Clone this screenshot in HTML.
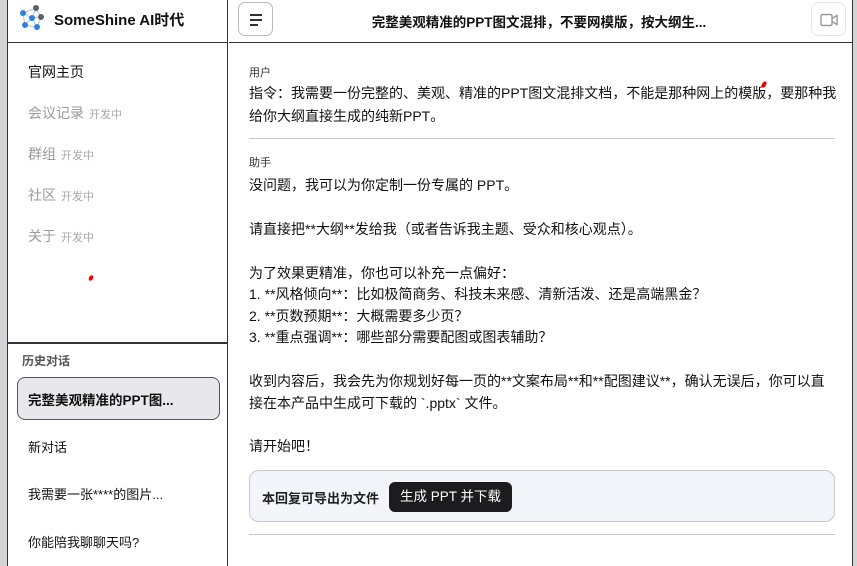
<!DOCTYPE html>
<html><head><meta charset="utf-8"><style>
*{margin:0;padding:0;box-sizing:border-box}
body{width:857px;height:566px;overflow:hidden;background:#d4d4d8;font-family:"Liberation Sans","Noto Sans CJK SC",sans-serif;color:#111;position:relative}
.app{position:absolute;left:7px;top:0;width:846px;height:566px;background:#fff;border-left:1.5px solid #333;border-right:1.5px solid #333}
.side{position:absolute;left:0;top:0;width:220px;height:566px;border-right:1.5px solid #333}
.hdr{position:absolute;left:0;top:0;width:100%;height:43px;border-bottom:1.5px solid #333}
.abs{position:absolute;white-space:nowrap}
.nav{left:20px;font-size:14px;color:#111}
.nav.dis{color:#9a9a9a}
.nav small{font-size:11px;color:#a8a8a8;margin-left:5px}
.main{position:absolute;left:221px;top:0;right:0;height:566px}
.t{position:absolute;left:20px;font-size:14px;line-height:22px;white-space:nowrap}
.lbl{position:absolute;left:20px;font-size:11px;color:#333}
.hr{position:absolute;left:20px;width:586px;height:1px;background:#c8c8c8}
</style></head><body>
<div class="app">
 <div class="side">
  <div class="hdr">
   <svg class="abs" style="left:10px;top:5px" width="32" height="28" viewBox="0 0 32 28">
    <g stroke="#b0c4de" stroke-width="1"><line x1="5" y1="8" x2="18" y2="3"/><line x1="5" y1="8" x2="14" y2="13"/><line x1="18" y1="3" x2="14" y2="13"/><line x1="18" y1="3" x2="23" y2="12"/><line x1="14" y1="13" x2="23" y2="12"/><line x1="14" y1="13" x2="7" y2="20"/><line x1="14" y1="13" x2="19" y2="22"/><line x1="7" y1="20" x2="19" y2="22"/><line x1="23" y1="12" x2="19" y2="22"/><line x1="5" y1="8" x2="7" y2="20"/></g>
    <circle cx="5" cy="8" r="3" fill="#2f7fe0"/><circle cx="18" cy="3" r="3" fill="#5a6270"/><circle cx="14" cy="13" r="3" fill="#2f7fe0"/><circle cx="23" cy="12" r="3" fill="#5a6270"/><circle cx="7" cy="20" r="3" fill="#2f7fe0"/><circle cx="19" cy="22" r="3" fill="#2f7fe0"/>
   </svg>
   <div class="abs" style="left:46px;top:9px;font-size:15px;font-weight:bold">SomeShine AI时代</div>
  </div>
  <div class="abs nav" style="top:62px">官网主页</div>
  <div class="abs nav dis" style="top:103px">会议记录<small>开发中</small></div>
  <div class="abs nav dis" style="top:144px">群组<small>开发中</small></div>
  <div class="abs nav dis" style="top:185px">社区<small>开发中</small></div>
  <div class="abs nav dis" style="top:226px">关于<small>开发中</small></div>
  <div class="abs" style="left:81px;top:275px;width:4px;height:6px;background:#e00;border-radius:50%;transform:rotate(30deg)"></div>
  <div class="abs" style="left:0;top:342px;width:220px;height:1.5px;background:#333"></div>
  <div class="abs" style="left:14px;top:352px;font-size:12px;font-weight:bold;color:#555">历史对话</div>
  <div class="abs" style="left:9px;top:377px;width:203px;height:43px;background:#e8e8ec;border:1px solid #555;border-radius:8px"></div>
  <div class="abs" style="left:20px;top:389px;font-size:13.5px;font-weight:bold">完整美观精准的PPT图...</div>
  <div class="abs" style="left:20px;top:437px;font-size:13px">新对话</div>
  <div class="abs" style="left:20px;top:484px;font-size:13px">我需要一张****的图片...</div>
  <div class="abs" style="left:20px;top:532px;font-size:13px">你能陪我聊聊天吗?</div>
 </div>
 <div class="main">
  <div class="hdr">
   <div class="abs" style="left:9px;top:2px;width:35px;height:34px;border:1px solid #bbb;border-radius:7px">
    <div class="abs" style="left:11px;top:11px;width:12px;height:1.6px;background:#333"></div>
    <div class="abs" style="left:11px;top:16px;width:12px;height:1.6px;background:#333"></div>
    <div class="abs" style="left:11px;top:21px;width:8px;height:1.6px;background:#333"></div>
   </div>
   <div class="abs" style="left:60px;width:500px;top:11px;text-align:center;font-size:13.5px;font-weight:bold">完整美观精准的PPT图文混排，不要网模版，按大纲生...</div>
   <div class="abs" style="left:582px;top:2px;width:35px;height:34px;border:1px solid #e4e4e4;border-radius:8px">
    <svg class="abs" style="left:8px;top:10px" width="19" height="14" viewBox="0 0 19 14"><rect x="1" y="1.5" width="11" height="11" rx="1.5" fill="none" stroke="#999" stroke-width="1.4"/><path d="M12 5.5L17 2.5V11.5L12 8.5" fill="none" stroke="#999" stroke-width="1.4"/></svg>
   </div>
  </div>
  <div class="lbl" style="top:64px">用户</div>
  <div class="t" style="top:82px">指令：我需要一份完整的、美观、精准的PPT图文混排文档，不能是那种网上的模版，要那种我</div>
  <div class="t" style="top:105px">给你大纲直接生成的纯新PPT。</div>
  <div class="abs" style="left:533px;top:81px;width:4px;height:7px;background:#e00;border-radius:50%;transform:rotate(35deg)"></div>
  <div class="hr" style="top:138px"></div>
  <div class="lbl" style="top:154px">助手</div>
  <div class="t" style="top:174px">没问题，我可以为你定制一份专属的 PPT。</div>
  <div class="t" style="top:218px">请直接把**大纲**发给我（或者告诉我主题、受众和核心观点）。</div>
  <div class="t" style="top:262px">为了效果更精准，你也可以补充一点偏好：</div>
  <div class="t" style="top:283px">1. **风格倾向**：比如极简商务、科技未来感、清新活泼、还是高端黑金？</div>
  <div class="t" style="top:305px">2. **页数预期**：大概需要多少页？</div>
  <div class="t" style="top:326px">3. **重点强调**：哪些部分需要配图或图表辅助？</div>
  <div class="t" style="top:370px">收到内容后，我会先为你规划好每一页的**文案布局**和**配图建议**，确认无误后，你可以直</div>
  <div class="t" style="top:392px">接在本产品中生成可下载的 `.pptx` 文件。</div>
  <div class="t" style="top:435px">请开始吧！</div>
  <div class="abs" style="left:20px;top:470px;width:586px;height:52px;background:#f4f5fa;border:1px solid #c8c8cc;border-radius:10px">
   <div class="abs" style="left:12px;top:17px;font-size:13px;font-weight:bold;color:#222">本回复可导出为文件</div>
   <div class="abs" style="left:139px;top:11px;width:123px;height:30px;background:#1c1c1e;border-radius:6px;color:#fff;font-size:13.5px;text-align:center;line-height:30px">生成 PPT 并下载</div>
  </div>
  <div class="hr" style="top:534px"></div>
 </div>
</div>
</body></html>
